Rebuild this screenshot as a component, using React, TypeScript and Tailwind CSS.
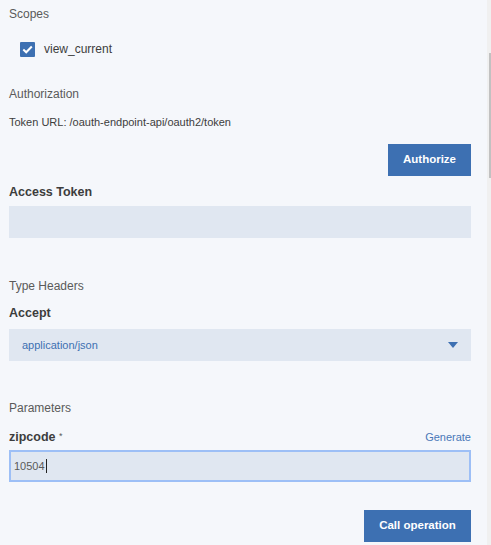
import React from "react";

export default function App() {
  const font = { fontFamily: '"Liberation Sans", Arial, sans-serif' };
  return (
    <div className="flex h-[545px] w-[491px] overflow-hidden bg-[#f5f7fb]" style={font}>
      <div className="flex flex-1 flex-col pl-[9px] pr-[16px]">
        <div className="mt-[6px] h-[16px] text-[12px] leading-[16px] text-[#5a5a5a]">Scopes</div>
        <div className="mt-[19px] flex h-[16px] items-center pl-[11px]">
          <span className="flex h-[15px] w-[15px] items-center justify-center rounded-[1px] bg-[#3d70b2]">
            <svg width="11" height="9" viewBox="0 0 11 9" fill="none">
              <path d="M1.3 4.6 L4.2 7.3 L9.8 1.5" stroke="white" strokeWidth="2" />
            </svg>
          </span>
          <span className="ml-[9px] text-[12px] leading-[16px] text-[#3d3d3d]">view_current</span>
        </div>
        <div className="mt-[29px] h-[16px] text-[12px] leading-[16px] text-[#5a5a5a]">Authorization</div>
        <div className="mt-[12px] h-[16px] text-[11px] leading-[16px] text-[#3d3d3d]">
          Token URL: /oauth-endpoint-api/oauth2/token
        </div>
        <div className="mt-[14px] flex justify-end">
          <button className="h-[32px] w-[83px] bg-[#3d70b2] text-[11.5px] font-bold text-white">Authorize</button>
        </div>
        <div className="mt-[8px] h-[16px] text-[12.5px] font-bold leading-[16px] text-[#3d3d3d]">Access Token</div>
        <div className="mt-[6px] h-[32px] bg-[#e0e7f1]" />
        <div className="mt-[40px] h-[16px] text-[12px] leading-[16px] text-[#5a5a5a]">Type Headers</div>
        <div className="mt-[11px] h-[16px] text-[12.5px] font-bold leading-[16px] text-[#3d3d3d]">Accept</div>
        <div className="mt-[8px] flex h-[32px] items-center justify-between bg-[#e0e7f1] pl-[13px] pr-[13px]">
          <span className="text-[11px] text-[#3d70b2]">application/json</span>
          <svg width="10" height="6" viewBox="0 0 10 6">
            <path d="M0 0 H10 L5 6 Z" fill="#3d70b2" />
          </svg>
        </div>
        <div className="mt-[39px] h-[16px] text-[12px] leading-[16px] text-[#5a5a5a]">Parameters</div>
        <div className="mt-[13px] flex h-[16px] items-baseline justify-between leading-[16px]">
          <span className="text-[12.5px] font-bold text-[#3d3d3d]">
            zipcode <span className="relative -top-[2px] text-[9px] font-normal text-[#5a5a5a]">*</span>
          </span>
          <span className="text-[11px] text-[#4a78b8]">Generate</span>
        </div>
        <div className="mt-[5px] flex h-[32px] items-center border-2 border-[#9dbff6] bg-[#e0e7f1] pl-[3px]">
          <span className="text-[11px] text-[#5a5a5a]">10504</span>
          <span className="ml-[1px] h-[14px] w-[1px] bg-[#222]" />
        </div>
        <div className="mt-[28px] flex justify-end">
          <button className="h-[32px] w-[107px] bg-[#3d70b2] text-[11.5px] font-bold text-white">Call operation</button>
        </div>
      </div>
      <div className="flex w-[4px] flex-col bg-[#f0f0f0]">
        <div className="ml-[2px] mt-[53px] h-[125px] w-[2px] bg-[#c1c1c1]" />
      </div>
    </div>
  );
}
